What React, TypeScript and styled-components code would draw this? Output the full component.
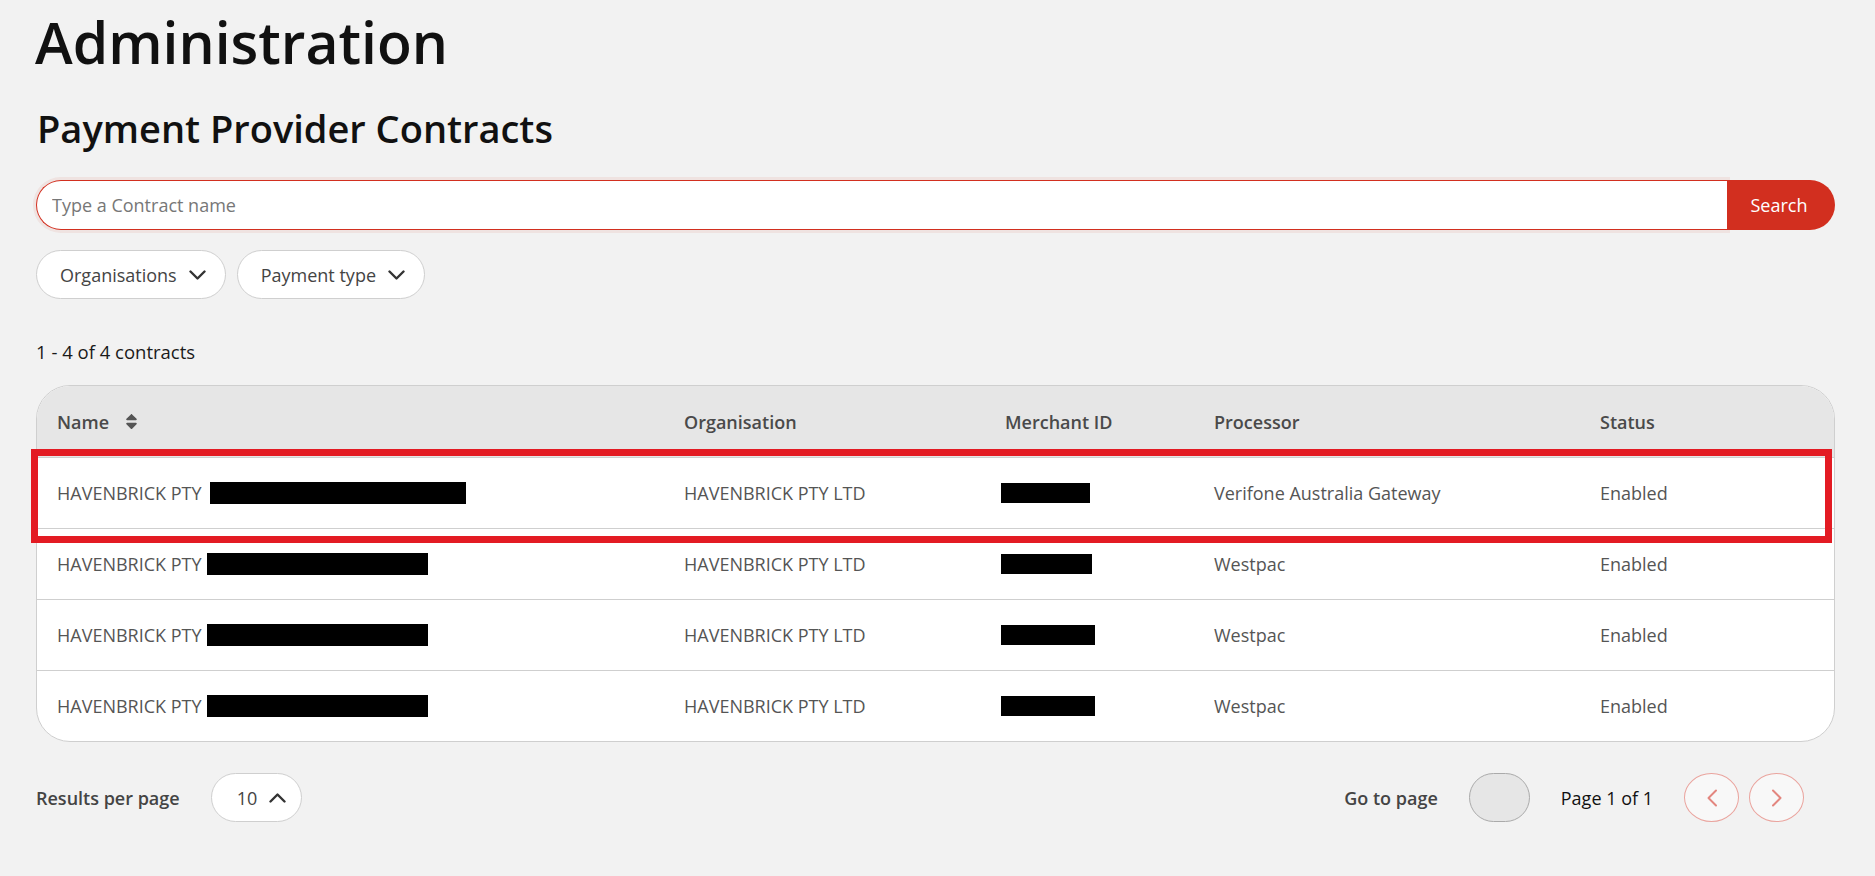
import styled, { createGlobalStyle } from 'styled-components';
import { FaSort } from 'react-icons/fa';

const RED = '#d22f1f';

interface Contract {
  redactWidth: number;
  redactGap: number;
  merchantWidth: number;
  processor: string;
  status: string;
}

const CONTRACTS: Contract[] = [
  { redactWidth: 256, redactGap: 8, merchantWidth: 89, processor: 'Verifone Australia Gateway', status: 'Enabled' },
  { redactWidth: 221, redactGap: 5, merchantWidth: 91, processor: 'Westpac', status: 'Enabled' },
  { redactWidth: 221, redactGap: 5, merchantWidth: 94, processor: 'Westpac', status: 'Enabled' },
  { redactWidth: 221, redactGap: 5, merchantWidth: 94, processor: 'Westpac', status: 'Enabled' },
];

const Chevron = ({ up = false }: { up?: boolean }) => (
  <svg width="17" height="10" viewBox="0 0 17 10" fill="none">
    <polyline
      points={up ? '1.5,8.5 8.5,1.5 15.5,8.5' : '1.5,1.5 8.5,8.5 15.5,1.5'}
      stroke="#333"
      strokeWidth="2.4"
      strokeLinecap="round"
      strokeLinejoin="round"
    />
  </svg>
);

const PageArrow = ({ dir }: { dir: 'prev' | 'next' }) => (
  <svg width="12" height="18" viewBox="0 0 12 18" fill="none">
    <polyline
      points={dir === 'prev' ? '10,1.5 2.5,9 10,16.5' : '2,1.5 9.5,9 2,16.5'}
      stroke="#e3867f"
      strokeWidth="2"
      strokeLinecap="round"
      strokeLinejoin="round"
    />
  </svg>
);

const App = () => {
  return (
    <>
      <GlobalStyle />
      <Page>
        <Title>Administration</Title>
        <Subtitle>Payment Provider Contracts</Subtitle>

        <SearchBar>
          <SearchInput placeholder="Type a Contract name" />
          <SearchButton>Search</SearchButton>
        </SearchBar>

        <Filters>
          <Pill>
            Organisations <Chevron />
          </Pill>
          <Pill>
            Payment type <Chevron />
          </Pill>
        </Filters>

        <ResultCount>1 - 4 of 4 contracts</ResultCount>

        <TableWrap>
          <Table>
            <HeaderRow>
              <HeadCell>
                Name <FaSort size={19} color="#555" />
              </HeadCell>
              <HeadCell>Organisation</HeadCell>
              <HeadCell>Merchant ID</HeadCell>
              <HeadCell>Processor</HeadCell>
              <HeadCell>Status</HeadCell>
            </HeaderRow>
            {CONTRACTS.map((c, i) => (
              <Row key={i}>
                <Cell>
                  HAVENBRICK PTY
                  <Redacted $width={c.redactWidth} $gap={c.redactGap} />
                </Cell>
                <Cell>HAVENBRICK PTY LTD</Cell>
                <Cell>
                  <Redacted $width={c.merchantWidth} $gap={-4} $height={20} />
                </Cell>
                <Cell>{c.processor}</Cell>
                <Cell>{c.status}</Cell>
              </Row>
            ))}
          </Table>
          <Highlight />
        </TableWrap>

        <Footer>
          <FooterGroup>
            <FooterLabel>Results per page</FooterLabel>
            <PerPagePill>
              10 <Chevron up />
            </PerPagePill>
          </FooterGroup>
          <FooterGroup>
            <FooterLabel>Go to page</FooterLabel>
            <PageInput />
            <PageInfo>Page 1 of 1</PageInfo>
            <ArrowGroup>
              <ArrowButton>
                <PageArrow dir="prev" />
              </ArrowButton>
              <ArrowButton>
                <PageArrow dir="next" />
              </ArrowButton>
            </ArrowGroup>
          </FooterGroup>
        </Footer>
      </Page>
    </>
  );
};

const GlobalStyle = createGlobalStyle`
  body {
    margin: 0;
    background: #f2f2f2;
    font-family: 'Open Sans', 'Noto Sans', sans-serif;
    color: #222;
  }
  * {
    box-sizing: border-box;
  }
`;

const Page = styled.div`
  padding: 0 40px 40px 36px;
`;

const Title = styled.h1`
  margin: 6px 0 0 -1px;
  font-size: 57px;
  line-height: 72px;
  font-weight: 600;
  color: #111;
`;

const Subtitle = styled.h2`
  margin: 26px 0 0 1px;
  font-size: 38px;
  line-height: 48px;
  font-weight: 600;
  color: #111;
`;

const SearchBar = styled.div`
  margin-top: 28px;
  display: flex;
  height: 50px;
`;

const SearchInput = styled.input`
  flex: 1;
  height: 50px;
  border: 1px solid ${RED};
  border-right: none;
  border-radius: 25px 0 0 25px;
  padding: 0 15px;
  font-family: inherit;
  font-size: 18px;
  background: #fff;
  box-shadow: 0 0 0 3px rgba(210, 47, 31, 0.08);
  outline: none;
  &::placeholder {
    color: #777;
  }
`;

const SearchButton = styled.button`
  width: 108px;
  height: 50px;
  border: none;
  border-radius: 0 25px 25px 0;
  background: ${RED};
  color: #fff;
  font-family: inherit;
  font-size: 18px;
  padding: 0 4px 0 0;
`;

const Filters = styled.div`
  margin-top: 20px;
  display: flex;
  gap: 11px;
`;

const Pill = styled.button`
  display: flex;
  align-items: center;
  gap: 12px;
  height: 49px;
  padding: 0 19px 0 23px;
  border: 1px solid #cfcfcf;
  border-radius: 25px;
  background: #fff;
  font-family: inherit;
  font-size: 18px;
  color: #444;
`;

const ResultCount = styled.div`
  margin-top: 41px;
  font-size: 18.5px;
  line-height: 24px;
  color: #1a1a1a;
`;

const TableWrap = styled.div`
  position: relative;
  margin-top: 21px;
`;

const Table = styled.div`
  border: 1px solid #cfcfcf;
  border-radius: 34px;
  overflow: hidden;
  background: #fff;
`;

const gridColumns = `
  display: grid;
  grid-template-columns: 627px 321px 209px 386px 1fr;
  align-items: center;
`;

const HeaderRow = styled.div`
  ${gridColumns}
  height: 71px;
  background: #e6e6e6;
`;

const Row = styled.div`
  ${gridColumns}
  height: 71px;
  border-top: 1px solid #cfcfcf;
`;

const HeadCell = styled.div`
  display: flex;
  align-items: center;
  gap: 13px;
  padding-left: 20px;
  font-size: 18px;
  font-weight: 600;
  color: #4a4a4a;
`;

const Cell = styled.div`
  display: flex;
  align-items: center;
  padding-left: 20px;
  font-size: 18px;
  color: #555;
  white-space: nowrap;
`;

const Redacted = styled.span<{ $width: number; $gap: number; $height?: number }>`
  display: inline-block;
  width: ${(p) => p.$width}px;
  height: ${(p) => p.$height ?? 22}px;
  margin-left: ${(p) => p.$gap}px;
  background: #000;
`;

const Highlight = styled.div`
  position: absolute;
  left: -5px;
  top: 64px;
  width: 1801px;
  height: 94px;
  border: 7px solid #e31b23;
  pointer-events: none;
`;

const Footer = styled.div`
  margin-top: 31px;
  display: flex;
  justify-content: space-between;
  align-items: center;
  padding-right: 31px;
`;

const FooterGroup = styled.div`
  display: flex;
  align-items: center;
  gap: 31px;
`;

const FooterLabel = styled.span`
  font-size: 18px;
  font-weight: 600;
  color: #444;
`;

const PerPagePill = styled.button`
  display: flex;
  align-items: center;
  gap: 12px;
  width: 91px;
  height: 49px;
  padding: 0 0 0 25px;
  border: 1px solid #cfcfcf;
  border-radius: 25px;
  background: #fff;
  font-family: inherit;
  font-size: 18px;
  color: #444;
`;

const PageInput = styled.div`
  width: 61px;
  height: 49px;
  border: 1px solid #aaa;
  border-radius: 25px;
  background: #e6e6e6;
`;

const PageInfo = styled.span`
  font-size: 18px;
  color: #111;
`;

const ArrowGroup = styled.div`
  display: flex;
  gap: 10px;
`;

const ArrowButton = styled.button`
  display: flex;
  align-items: center;
  justify-content: center;
  width: 55px;
  height: 49px;
  padding: 0;
  border: 1px solid #eaa49e;
  border-radius: 50%;
  background: #f8f8f8;
`;

export default App;
